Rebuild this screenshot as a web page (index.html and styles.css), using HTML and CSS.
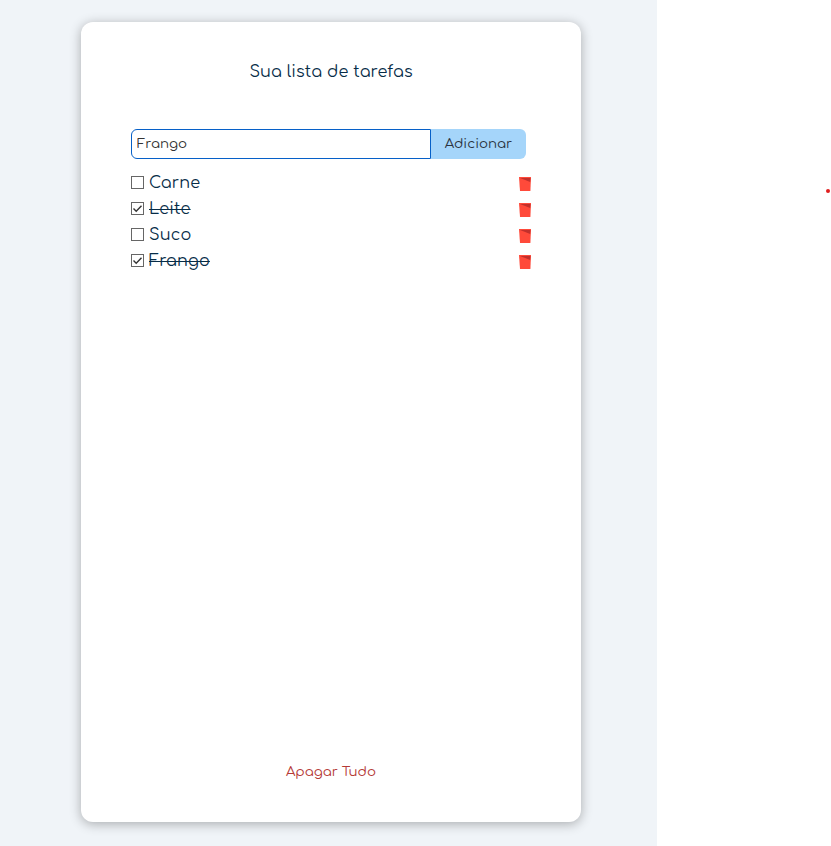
FILE: index.html
```html
<!DOCTYPE html>
<html lang="pt-BR">
<head>
<meta charset="utf-8">
<title>Sua lista de tarefas</title>
<link rel="stylesheet" href="styles.css">
</head>
<body>
<div class="page">
  <main class="card">
    <h1 class="title">Sua lista de tarefas</h1>
    <form class="add">
      <input class="field" type="text" value="Frango">
      <button class="submit" type="button">Adicionar</button>
    </form>
    <ul class="tasks">
      <li class="task"><svg class="check" viewBox="0 0 13 13"><rect x=".5" y=".5" width="12" height="12"/></svg><span class="name">Carne</span><svg class="trash" viewBox="0 0 12 14"><path fill="#ff4a3a" d="M0 0h12l-.6 14H1z"/><path fill="#c2302c" d="M1 1h10.5l-.3 4z"/></svg></li>
      <li class="task"><svg class="check" viewBox="0 0 13 13"><rect x=".5" y=".5" width="12" height="12"/><path d="M2.5 6.5l2.7 2.7 5.3-5.5"/></svg><span class="name done">Leite</span><svg class="trash" viewBox="0 0 12 14"><path fill="#ff4a3a" d="M0 0h12l-.6 14H1z"/><path fill="#c2302c" d="M1 1h10.5l-.3 4z"/></svg></li>
      <li class="task"><svg class="check" viewBox="0 0 13 13"><rect x=".5" y=".5" width="12" height="12"/></svg><span class="name">Suco</span><svg class="trash" viewBox="0 0 12 14"><path fill="#ff4a3a" d="M0 0h12l-.6 14H1z"/><path fill="#c2302c" d="M1 1h10.5l-.3 4z"/></svg></li>
      <li class="task"><svg class="check" viewBox="0 0 13 13"><rect x=".5" y=".5" width="12" height="12"/><path d="M2.5 6.5l2.7 2.7 5.3-5.5"/></svg><span class="name done">Frango</span><svg class="trash" viewBox="0 0 12 14"><path fill="#ff4a3a" d="M0 0h12l-.6 14H1z"/><path fill="#c2302c" d="M1 1h10.5l-.3 4z"/></svg></li>
    </ul>
    <button class="clear" type="button">Apagar Tudo</button>
  </main>
</div>
<i class="dot"></i>
</body>
</html>
```
FILE: styles.css
```css
* { box-sizing: border-box; }

body {
  margin: 0;
  display: flex;
  height: 846px;
  background: #fff;
  color: #062c47;
  font-family: Comfortaa, Inter, "Open Sans", sans-serif;
  font-size: 16px;
  overflow: hidden;
}

.page {
  width: 657px;
  height: 846px;
  padding: 22px 0 0 81px;
  background: #f0f4f8;
}

.card {
  display: flex;
  flex-direction: column;
  width: 500px;
  height: 800px;
  padding: 40px 50px;
  background: #fff;
  border-radius: 12px;
  box-shadow: 0 2px 12px rgba(0, 0, 0, .3);
}

.title {
  margin: 0;
  text-align: center;
  font-size: 16px;
  font-weight: 400;
  line-height: 20px;
  letter-spacing: .1px;
}

.add {
  display: flex;
  height: 30px;
  margin-top: 47px;
}

.field, .submit, .clear {
  font: inherit;
  font-size: 13.333px;
}

.field {
  width: 300px;
  padding: 0 5px 2px;
  border: 1px solid #0660c8;
  border-radius: 6px 0 0 6px;
  color: #333;
  outline: 0;
}

.submit {
  width: 95px;
  padding: 0 0 2px;
  border: 0;
  border-radius: 0 6px 6px 0;
  background: #a5d5fa;
  color: #2b3440;
}

.tasks {
  margin: 11px 0 0;
  padding: 0;
  list-style: none;
}

.task {
  display: flex;
  align-items: center;
  width: 400px;
  height: 26px;
}

.check {
  width: 13px;
  height: 13px;
  margin: -1px 5px 0 0;
  fill: #fff;
  stroke: #666;
}

.check path { fill: none; stroke: #333; stroke-width: 1.4; }

.name { flex: 1; letter-spacing: .15px; }

.done { text-decoration: line-through; }

.trash {
  width: 12px;
  height: 14px;
  margin-top: 2px;
}

.clear {
  align-self: center;
  margin-top: auto;
  padding: 0;
  border: 0;
  background: none;
  color: #b53a36;
  line-height: 20px;
}

.dot {
  width: 4px;
  height: 4px;
  margin: 189px 0 0 169px;
  border-radius: 50%;
  background: #e01e1e;
}
```
